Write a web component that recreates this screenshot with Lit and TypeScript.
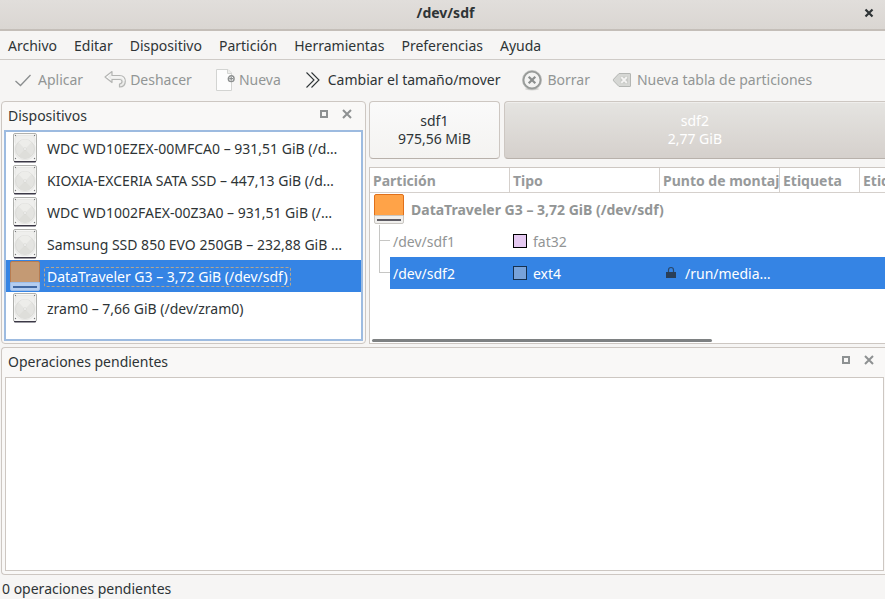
import { LitElement, html, svg, css, nothing } from "lit";
import { customElement, property, state } from "lit/decorators.js";
import { classMap } from "lit/directives/class-map.js";

const baseStyles = css`
  *,
  *::before,
  *::after {
    box-sizing: border-box;
  }
  button {
    font: inherit;
    color: inherit;
    background: none;
    border: 0;
    margin: 0;
    padding: 0;
  }
  svg {
    display: block;
    flex: none;
  }
`;

type ActionIcon = "apply" | "undo" | "new" | "resize" | "delete" | "table";

const actionIcons: Record<ActionIcon, unknown> = {
  apply: svg`<path d="M3.500 12 8.500 16.500 18.500 6" fill="none" stroke="#8b8e8f" stroke-width="1.300"/>`,
  undo: svg`
    <path d="M8 2.500 1 8 8 13.500V10.500H15.500Q18 10.500 18 12.500T15.500 15V18Q21.300 18 21.300 12.300T15.500 6.500H8Z" fill="#ececea" stroke="#b4b5b3" stroke-width="1.200" stroke-linejoin="round"/>
    <path d="M6.800 5 2.800 8 6.800 10.700M7 8H15.500Q20 8 20 12" fill="none" stroke="#fafafa"/>`,
  new: svg`
    <path d="M3.500.5H15L18.500 4V21.500H3.500Z" fill="#fdfdfd" stroke="#d3d4d2"/>
    <path d="M14.500.5V4.500H18.500" fill="#eeeeec" stroke="#d3d4d2"/>
    <circle cx="18.200" cy="9.700" r="2.900" fill="#fff" stroke="#8c8f8f" stroke-width="1.400"/>
    <path d="M18.200 7.700V11.700M16.200 9.700H20.200" stroke="#8c8f8f" stroke-width="1.200"/>`,
  resize: svg`
    <path d="M4.500 3.500 12 11 4.500 18.500M9.500 3.500 17 11 9.500 18.500" fill="none" stroke="#2e3436" stroke-width="1.100"/>`,
  delete: svg`
    <ellipse cx="11" cy="20" rx="7" ry="1.500" fill="#d6d6d4"/>
    <circle cx="11" cy="11" r="8.600" fill="#f3f3f2" stroke="#979a98" stroke-width="2"/>
    <circle cx="11" cy="11" r="9.600" fill="none" stroke="#b5b7b5" stroke-width=".6"/>
    <path d="M7.700 7.700 14.300 14.300M14.300 7.700 7.700 14.300" stroke="#8c8f8e" stroke-width="2.200"/>`,
  table: svg`
    <path d="M8 4.500H19Q19.500 4.500 19.500 5V17Q19.500 17.500 19 17.500H8L2.500 11.800V10.300Z" fill="#d6d7d4" stroke="#b4b6b3"/>
    <path d="M9.500 7.500H17V14.500H9.500Z" fill="#c9cac7"/>
    <path d="M10.300 8.200 15.800 13.800M15.800 8.200 10.300 13.800" stroke="#f6f5f4" stroke-width="1.900"/>`,
};

const harddisk = html`
  <svg width="32" height="32" viewBox="0 0 32 32" aria-hidden="true">
    <rect x="4.500" y="1.500" width="23" height="28" rx="1.500" fill="#f7f7f6" stroke="#b0b1ae" />
    <path d="M5 29H27V29.500Q27 30.500 26 30.500H6Q5 30.500 5 29.500Z" fill="#3b3846" />
    <path
      d="M8 3.500H24L26 6.500V10L25 12 26 15V20Q25 27 18 27.500H14Q7 27 6 20V15L7 12 6 10V6.500Z"
      fill="#efefed"
      stroke="#e3e3df"
      stroke-width=".7"
    />
    <circle cx="16" cy="17" r="9.500" fill="#e4e4e1" stroke="#d6d6d2" stroke-width=".7" />
    <path d="M16 17 9.500 10.200Q16 4.500 22.500 10.200Z" fill="#ededea" />
    <path d="M16 17 9.500 23.800Q16 29 22.500 23.800Z" fill="#dededa" />
    <circle cx="16" cy="17" r="1.300" fill="#fafafa" stroke="#c8c8c4" stroke-width=".5" />
    <g fill="#77797a">
      <circle cx="6.500" cy="3.500" r=".7" />
      <circle cx="25.500" cy="3.500" r=".7" />
      <circle cx="6.500" cy="26.500" r=".7" />
      <circle cx="25.500" cy="26.500" r=".7" />
    </g>
  </svg>
`;

const usbDisk = (selected: boolean) => html`
  <svg width="32" height="32" viewBox="0 0 32 32" aria-hidden="true">
    <path
      d="M1.500 23V3Q1.500 1.500 3 1.500H29Q30.500 1.500 30.500 3V23Z"
      fill=${selected ? "#c49a74" : "#ffa348"}
      stroke=${selected ? "#b87c50" : "#e0701a"}
    />
    <path
      d="M1.500 22.500H30.500V29Q30.500 30.500 29 30.500H3Q1.500 30.500 1.500 29Z"
      fill=${selected ? "#b3cdf0" : "#f0efed"}
      stroke=${selected ? "#9dbde8" : "#c9c6c1"}
    />
    <path d="M4 27H28" stroke=${selected ? "#4169a3" : "#5e5c64"} stroke-width="2" />
  </svg>
`;

const lock = html`
  <svg width="16" height="16" viewBox="0 0 16 16" aria-hidden="true">
    <path d="M5.500 8V5Q5.500 2.500 8 2.500T10.500 5V8" fill="none" stroke="#2a486c" stroke-width="1.200" />
    <rect x="3" y="7" width="10" height="6" fill="#2a3f58" />
  </svg>
`;

@customElement("dock-panel")
class DockPanel extends LitElement {
  @property() heading = "";

  static styles = [
    baseStyles,
    css`
      :host {
        display: flex;
        flex-direction: column;
        min-width: 0;
        background: #f9f8f7;
        border: 1px solid #cdc7c2;
        border-radius: 4px;
        padding: 0 2px 2px;
      }
      .bar {
        display: flex;
        align-items: center;
        height: 28px;
        padding: 0 11px 0 4px;
      }
      .heading {
        flex: 1;
        margin: 0;
        font-size: 14px;
        font-weight: 400;
      }
      .tools {
        display: flex;
        gap: 13px;
        padding-bottom: 4px;
      }
    `,
  ];

  render() {
    return html`
      <header class="bar">
        <h2 class="heading">${this.heading}</h2>
        <div class="tools">
          <button aria-label="Desacoplar">
            <svg width="10" height="10" viewBox="0 0 10 10">
              <rect x="2" y="2" width="6" height="6" fill="none" stroke="#8e9192" stroke-width="2" />
            </svg>
          </button>
          <button aria-label="Cerrar panel">
            <svg width="10" height="10" viewBox="0 0 10 10">
              <path d="M1 1 9 9M9 1 1 9" stroke="#8e9192" stroke-width="2" />
            </svg>
          </button>
        </div>
      </header>
      <slot></slot>
    `;
  }
}

@customElement("device-list")
class DeviceList extends LitElement {
  @state() private selected = 4;

  private devices = [
    "WDC WD10EZEX-00MFCA0 – 931,51 GiB (/d…",
    "KIOXIA-EXCERIA SATA SSD – 447,13 GiB (/d…",
    "WDC WD1002FAEX-00Z3A0 – 931,51 GiB (/…",
    "Samsung SSD 850 EVO 250GB – 232,88 GiB …",
    "DataTraveler G3 – 3,72 GiB (/dev/sdf)",
    "zram0 – 7,66 GiB (/dev/zram0)",
  ];

  static styles = [
    baseStyles,
    css`
      :host {
        display: block;
        flex: 1;
        background: #fff;
        border: 2px solid #9dbbe0;
      }
      .list {
        list-style: none;
        margin: 0;
        padding: 0 0 15px;
      }
      .device {
        display: flex;
        align-items: center;
        gap: 3px;
        width: 100%;
        height: 32px;
        padding-left: 3px;
        text-align: left;
        white-space: nowrap;
      }
      .name {
        margin-top: 2px;
        border: 1px dashed transparent;
        border-radius: 2px;
        padding: 0 2px;
        line-height: 18px;
      }
      .selected {
        background: #3584e4;
        color: #fff;
      }
      .selected .name {
        border-color: #b5a58e;
      }
    `,
  ];

  render() {
    return html`
      <ul class="list">
        ${this.devices.map(
          (name, i) => html`
            <li>
              <button
                class=${classMap({ device: true, selected: i === this.selected })}
                aria-pressed=${i === this.selected}
                @click=${() => (this.selected = i)}
              >
                ${i === 4 ? usbDisk(i === this.selected) : harddisk}
                <span class="name">${name}</span>
              </button>
            </li>
          `
        )}
      </ul>
    `;
  }
}

@customElement("partition-view")
class PartitionView extends LitElement {
  static styles = [
    baseStyles,
    css`
      :host {
        display: flex;
        flex-direction: column;
        gap: 8px;
        min-width: 0;
      }
      .map {
        display: grid;
        grid-template-columns: 131fr 382fr;
        gap: 4px;
      }
      .part {
        height: 58px;
        line-height: 18px;
        text-align: center;
        border: 1px solid #cdc7c2;
        border-bottom-color: #b8b1ab;
        border-radius: 4px;
        background: linear-gradient(#fafafa, #f4f3f1);
      }
      .part.active {
        color: #fff;
        border-right: 0;
        border-radius: 4px 0 0 4px;
        background: linear-gradient(#e5e4e1, #d5d0cc);
        box-shadow: inset 0 1px #efeeec;
      }
      .size {
        display: block;
      }
      .tree {
        display: flex;
        flex-direction: column;
        flex: 1;
        overflow: hidden;
        background: #fff;
        border: 1px solid #cdc7c2;
        border-right: 0;
      }
      table {
        width: 100%;
        table-layout: fixed;
        border-collapse: separate;
        border-spacing: 0;
        white-space: nowrap;
      }
      .c-part {
        width: 140px;
      }
      .c-type {
        width: 150px;
      }
      .c-mount {
        width: 120px;
      }
      .c-label {
        width: 80px;
      }
      th {
        height: 25px;
        padding: 2px 0 0 3px;
        overflow: hidden;
        text-align: left;
        color: #979a9b;
        border-bottom: 1px solid #d5d0cc;
      }
      th:not(:last-child) {
        border-right: 1px solid #d5d0cc;
      }
      td {
        height: 32px;
        padding: 0 3px;
        color: #929595;
      }
      .disk {
        font-weight: 700;
      }
      .row {
        display: flex;
        align-items: center;
        gap: 6px;
      }
      .label {
        padding-top: 2px;
      }
      .branch {
        padding: 0 0 0 9px;
      }
      .node {
        display: flex;
        height: 32px;
      }
      .line {
        width: 11px;
        border-left: 1px solid #c6c6c4;
      }
      .line::before {
        content: "";
        display: block;
        height: 16px;
        border-bottom: 1px solid #c6c6c4;
      }
      .line.last {
        border-left: 0;
      }
      .line.last::before {
        border-left: 1px solid #c6c6c4;
      }
      .text {
        flex: 1;
        padding: 2px 0 0 3px;
        line-height: 30px;
      }
      .swatch {
        width: 14px;
        height: 14px;
        background: #e5c9f1;
        border: 1px solid #000;
      }
      .current td {
        color: #fff;
      }
      .current .text,
      .current td:not(.branch) {
        background: #3584e4;
      }
      .current .swatch {
        background: #77a2da;
        border-color: #15304f;
      }
      .thumb {
        width: 66%;
        height: 3px;
        margin: auto 0 1px 2px;
        border-radius: 2px;
        background: #7e8182;
      }
    `,
  ];

  render() {
    return html`
      <div class="map">
        <button class="part">sdf1<span class="size">975,56 MiB</span></button>
        <button class="part active">sdf2<span class="size">2,77 GiB</span></button>
      </div>
      <div class="tree">
        <table>
          <colgroup>
            <col class="c-part" />
            <col class="c-type" />
            <col class="c-mount" />
            <col class="c-label" />
            <col />
          </colgroup>
          <thead>
            <tr>
              <th>Partición</th>
              <th>Tipo</th>
              <th>Punto de montaje</th>
              <th>Etiqueta</th>
              <th>Etiqueta de la partición</th>
            </tr>
          </thead>
          <tbody>
            <tr>
              <td class="disk" colspan="5">
                <div class="row">
                  ${usbDisk(false)}<span class="label">DataTraveler G3 – 3,72 GiB (/dev/sdf)</span>
                </div>
              </td>
            </tr>
            <tr>
              <td class="branch">
                <div class="node"><span class="line"></span><span class="text">/dev/sdf1</span></div>
              </td>
              <td>
                <div class="row"><span class="swatch"></span><span class="label">fat32</span></div>
              </td>
              <td></td>
              <td></td>
              <td></td>
            </tr>
            <tr class="current">
              <td class="branch">
                <div class="node"><span class="line last"></span><span class="text">/dev/sdf2</span></div>
              </td>
              <td>
                <div class="row"><span class="swatch"></span><span class="label">ext4</span></div>
              </td>
              <td>
                <div class="row">${lock}<span class="label">/run/media…</span></div>
              </td>
              <td></td>
              <td></td>
            </tr>
          </tbody>
        </table>
        <div class="thumb"></div>
      </div>
    `;
  }
}

@customElement("app-root")
class AppRoot extends LitElement {
  private menus = [
    "Archivo",
    "Editar",
    "Dispositivo",
    "Partición",
    "Herramientas",
    "Preferencias",
    "Ayuda",
  ];

  private actions: { icon: ActionIcon; label: string; enabled?: boolean }[] = [
    { icon: "apply", label: "Aplicar" },
    { icon: "undo", label: "Deshacer" },
    { icon: "new", label: "Nueva" },
    { icon: "resize", label: "Cambiar el tamaño/mover", enabled: true },
    { icon: "delete", label: "Borrar" },
    { icon: "table", label: "Nueva tabla de particiones" },
  ];

  static styles = [
    baseStyles,
    css`
      :host {
        display: flex;
        flex-direction: column;
        min-height: 100vh;
        overflow: hidden;
        background: #f6f5f4;
        color: #2e3436;
        font: 14px/20px "Noto Sans", sans-serif;
      }
      .titlebar {
        display: grid;
        grid-template-columns: 38px 1fr 32px;
        align-items: center;
        height: 31px;
        padding-bottom: 4px;
        background: linear-gradient(#e1dedb, #dad6d2);
        border-bottom: 2px solid #c4beb8;
      }
      .title {
        grid-column: 2;
        margin: 0;
        font-size: 14px;
        text-align: center;
      }
      .close {
        justify-self: center;
      }
      .menubar {
        display: flex;
        gap: 17px;
        height: 29px;
        padding: 2px 8px 0;
        border-bottom: 1px solid #cfcbc7;
      }
      .toolbar {
        display: flex;
        align-items: center;
        gap: 21px;
        height: 41px;
        padding: 0 12px 2px;
        white-space: nowrap;
      }
      .action {
        display: flex;
        align-items: center;
        gap: 4px;
      }
      .action:disabled {
        color: #929595;
      }
      .workspace {
        display: grid;
        grid-template-columns: 365px minmax(0, 1fr);
        gap: 3px;
        min-height: 243px;
        padding-left: 1px;
      }
      .pending {
        flex: 1;
        margin: 3px 0 0 1px;
        border-right: 0;
        border-radius: 4px 0 0 4px;
        padding-right: 0;
      }
      .log {
        flex: 1;
        margin: 1px;
        background: #fff;
        border: 1px solid #cdc7c2;
      }
      .status {
        height: 24px;
        padding: 4px 2px 0;
      }
    `,
  ];

  render() {
    return html`
      <header class="titlebar">
        <h1 class="title">/dev/sdf</h1>
        <button class="close" aria-label="Cerrar">
          <svg width="10" height="10" viewBox="0 0 10 10">
            <path d="M1.500 1.500 8.500 8.500M8.500 1.500 1.500 8.500" stroke="#2e3436" stroke-width="2.200" />
          </svg>
        </button>
      </header>
      <nav class="menubar">${this.menus.map((label) => html`<button>${label}</button>`)}</nav>
      <div class="toolbar">
        ${this.actions.map(
          ({ icon, label, enabled }) => html`
            <button class="action" ?disabled=${!enabled}>
              <svg width="22" height="22" viewBox="0 0 22 22" aria-hidden="true">
                ${actionIcons[icon] ?? nothing}
              </svg>
              ${label}
            </button>
          `
        )}
      </div>
      <main class="workspace">
        <dock-panel heading="Dispositivos"><device-list></device-list></dock-panel>
        <partition-view></partition-view>
      </main>
      <dock-panel class="pending" heading="Operaciones pendientes">
        <div class="log"></div>
      </dock-panel>
      <footer class="status">0 operaciones pendientes</footer>
    `;
  }
}
